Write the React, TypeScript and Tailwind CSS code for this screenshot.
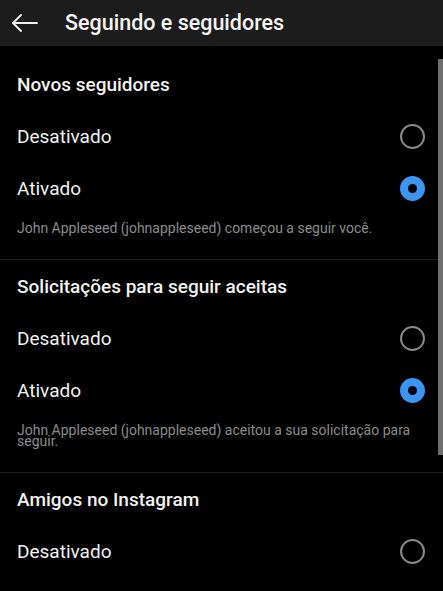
import React from "react";

function Radio({ checked }: { checked: boolean }) {
  if (checked) {
    return (
      <div className="w-[25px] h-[25px] rounded-full bg-[#3b95f2] flex items-center justify-center">
        <div className="w-[9px] h-[9px] rounded-full bg-black" />
      </div>
    );
  }
  return <div className="w-[25px] h-[25px] rounded-full border-2 border-[#8a8a8a]" />;
}

function Row({ label, checked }: { label: string; checked: boolean }) {
  return (
    <div className="h-[52px] flex items-center justify-between pl-[17px] pr-[18px]">
      <span className="pt-[3px] text-[19px] text-[#f2f2f2]">{label}</span>
      <Radio checked={checked} />
    </div>
  );
}

function Section({
  title,
  desc,
  first,
}: {
  title: string;
  desc?: string;
  first?: boolean;
}) {
  return (
    <div className={first ? "pt-3 pb-[25px] border-b border-[#1f1f1f]" : "pb-[25px] border-b border-[#1f1f1f]"}>
      <div className="h-[52px] flex items-center pl-[17px]">
        <span className="pt-[2px] text-[19px] font-medium text-[#f2f2f2]">{title}</span>
      </div>
      <Row label="Desativado" checked={false} />
      <Row label="Ativado" checked={true} />
      {desc && (
        <p className="mt-[9px] pl-[17px] pr-[14px] text-[14px] leading-[11px] text-[#8c8c8c]">{desc}</p>
      )}
    </div>
  );
}

export default function App() {
  return (
    <div
      className="relative w-[443px] h-[591px] overflow-hidden bg-black"
      style={{ fontFamily: "Roboto, 'Liberation Sans', sans-serif" }}
    >
      <div className="h-[46px] bg-[#1c1c1c] flex items-center">
        <svg width="28" height="20" viewBox="0 0 28 20" className="ml-[11px]" fill="none" stroke="#f2f2f2" strokeWidth="1.8" strokeLinecap="round" strokeLinejoin="round">
          <path d="M26 10H2" />
          <path d="M10 2L2 10l8 8" />
        </svg>
        <span className="ml-[26px] text-[21.5px] font-medium text-[#f5f5f5]">Seguindo e seguidores</span>
      </div>
      <Section
        first
        title="Novos seguidores"
        desc="John Appleseed (johnappleseed) começou a seguir você."
      />
      <Section
        title="Solicitações para seguir aceitas"
        desc="John Appleseed (johnappleseed) aceitou a sua solicitação para seguir."
      />
      <Section title="Amigos no Instagram" />
      <div className="absolute right-0 top-[59px] w-[5px] h-[396px] bg-[#6e6e6e]" />
    </div>
  );
}
